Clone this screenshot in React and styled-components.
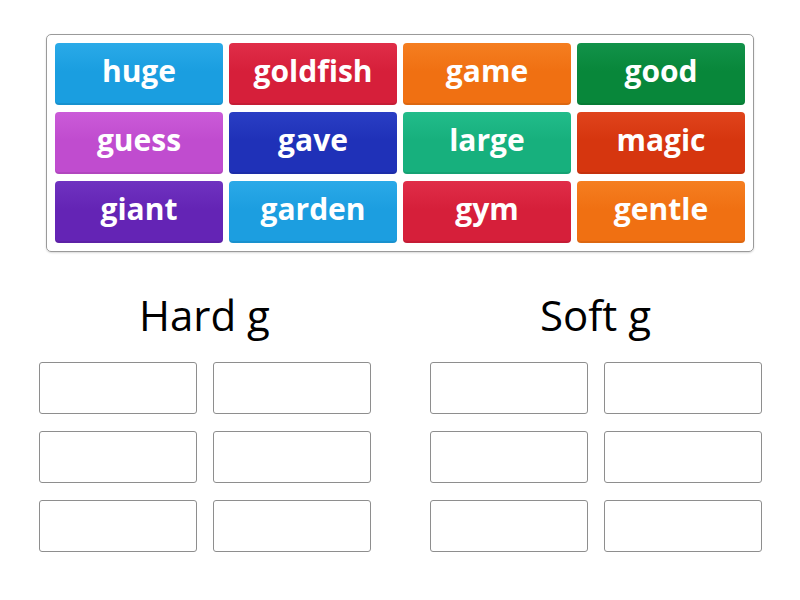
import React from "react";
import styled, { createGlobalStyle } from "styled-components";

const Global = createGlobalStyle`
  html, body { margin: 0; padding: 0; background: #fff; }
  body { font-family: "Open Sans", "Liberation Sans", sans-serif; }
`;

const Page = styled.div`
  width: 800px;
  height: 600px;
  box-sizing: border-box;
  padding: 34px 0 0 0;
  display: flex;
  flex-direction: column;
  align-items: center;
`;

const Pool = styled.div`
  width: 708px;
  box-sizing: border-box;
  border: 1px solid #9a9a9a;
  border-radius: 5px;
  padding: 8px;
  display: grid;
  grid-template-columns: repeat(4, 1fr);
  column-gap: 6px;
  row-gap: 7px;
  box-shadow: 0 1px 2px rgba(0,0,0,0.15);
`;

const Tile = styled.div`
  height: 62px;
  border-radius: 4px;
  background: linear-gradient(to bottom, ${p => p.$light} 0%, ${p => p.$c} 45%, ${p => p.$c} 100%);
  box-shadow: inset 0 -2px 0 rgba(0,0,0,0.08);
  display: flex;
  align-items: center;
  justify-content: center;
  color: #fff;
  font-family: "Open Sans", sans-serif;
  font-weight: 700;
  font-size: 30px;
  line-height: 1;
  padding-bottom: 6px;
  box-sizing: border-box;
`;

const Groups = styled.div`
  margin-top: 36px;
  display: flex;
  gap: 59px;
`;

const Group = styled.div`
  width: 332px;
  display: flex;
  flex-direction: column;
  align-items: center;
`;

const Title = styled.div`
  font-family: "Open Sans", sans-serif;
  font-size: 42px;
  font-weight: 400;
  color: #000;
  line-height: 54px;
  height: 54px;
  margin-bottom: 20px;
`;

const Slots = styled.div`
  width: 100%;
  display: grid;
  grid-template-columns: 158px 158px;
  justify-content: space-between;
  row-gap: 17px;
`;

const Slot = styled.div`
  height: 52px;
  box-sizing: border-box;
  border: 1px solid #8e8e8e;
  border-radius: 3px;
  background: #fff;
`;

const tiles = [
  ["huge", "#1a9ee0", "#2aaae8"],
  ["goldfish", "#d61f3a", "#e02d48"],
  ["game", "#f07012", "#f57e20"],
  ["good", "#08873a", "#12924a"],
  ["guess", "#c04ccf", "#cb5bd8"],
  ["gave", "#1f31b8", "#2a3ec4"],
  ["large", "#17b07d", "#22bc8a"],
  ["magic", "#d6360f", "#e0441c"],
  ["giant", "#6424b5", "#6f32c0"],
  ["garden", "#1c9ee0", "#2aa9e8"],
  ["gym", "#d61f3a", "#e02d48"],
  ["gentle", "#f07012", "#f57e20"],
];

export default function App() {
  return (
    <>
      <Global />
      <Page>
        <Pool>
          {tiles.map(([t, c, l]) => (
            <Tile key={t} $c={c} $light={l}>{t}</Tile>
          ))}
        </Pool>
        <Groups>
          {["Hard g", "Soft g"].map(g => (
            <Group key={g}>
              <Title>{g}</Title>
              <Slots>
                {Array.from({ length: 6 }).map((_, i) => <Slot key={i} />)}
              </Slots>
            </Group>
          ))}
        </Groups>
      </Page>
    </>
  );
}
